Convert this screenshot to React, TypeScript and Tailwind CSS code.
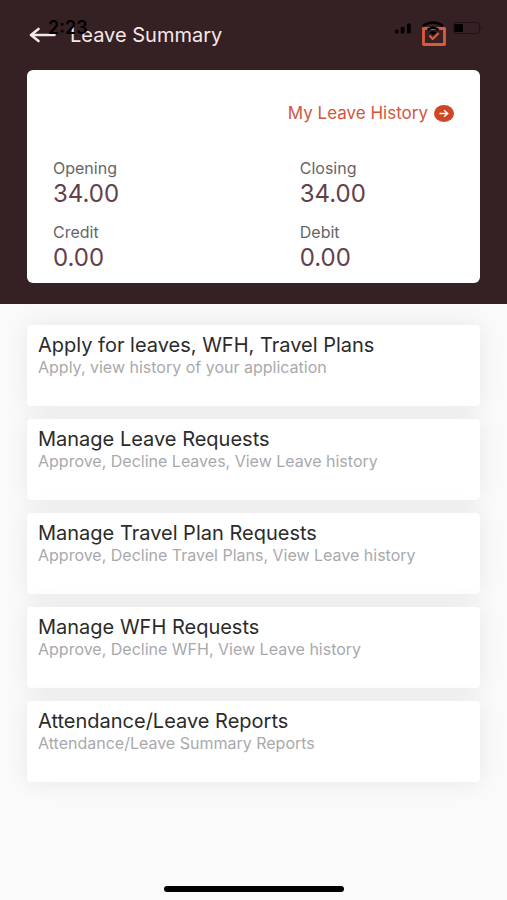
import React from 'react'

const menus = [
  { id: 'apply', title: 'Apply for leaves, WFH, Travel Plans', text: 'Apply, view history of your application' },
  { id: 'leave', title: 'Manage Leave Requests', text: 'Approve, Decline Leaves, View Leave history' },
  { id: 'travel', title: 'Manage Travel Plan Requests', text: 'Approve, Decline Travel Plans, View Leave history' },
  { id: 'wfh', title: 'Manage WFH Requests', text: 'Approve, Decline WFH, View Leave history' },
  { id: 'reports', title: 'Attendance/Leave Reports', text: 'Attendance/Leave Summary Reports' },
]

const balances = [
  { label: 'Opening', value: '34.00' },
  { label: 'Closing', value: '34.00' },
  { label: 'Credit', value: '0.00' },
  { label: 'Debit', value: '0.00' },
]

const StatusBar = () => {
  return (
    <div className="pointer-events-none absolute inset-x-0 top-4 z-10 flex items-center justify-between pl-12 pr-6 text-black">
      <span className="text-lg leading-6 font-semibold">2:23</span>
      <div className="flex items-center gap-2">
        <svg width="18" height="12" viewBox="0 0 18 12" fill="currentColor">
          <rect x="0" y="7.5" width="3.6" height="4" rx="1.5" />
          <rect x="5.7" y="5" width="3.8" height="6.5" rx="1" />
          <rect x="12" y="1.5" width="3.8" height="10" rx="1" />
        </svg>
        <svg width="24" height="14" viewBox="0 0 24 14" fill="none" stroke="currentColor" strokeWidth="2.6">
          <path d="M2 5Q12-2 22 5M6.5 9Q12 4.5 17.5 9" />
          <path d="M8.5 11.5Q12 9 15.5 11.5L12 14Z" fill="currentColor" stroke="none" />
        </svg>
        <svg width="30" height="12" viewBox="0 0 30 12">
          <rect x="0.5" y="0.5" width="26" height="11" rx="3" fill="none" stroke="currentColor" opacity="0.4" />
          <rect x="1.5" y="2" width="8.5" height="8" rx="1" fill="currentColor" />
          <path d="M28 4q2 2 0 4z" fill="currentColor" opacity="0.5" />
        </svg>
      </div>
    </div>
  )
}

const App = () => {
  return (
    <div className="flex min-h-screen flex-col bg-[#fafafa] font-['Inter','Liberation_Sans',sans-serif]">
      <header className="relative bg-[#352024] px-[27px] pt-5 pb-[21px]">
        <StatusBar />
        <div className="flex h-[30px] items-center pr-[33px] text-[#f5e8e9]">
          <button type="button" aria-label="Back" className="mr-3">
            <svg width="31" height="18" viewBox="0 0 31 18" fill="none" stroke="currentColor" strokeWidth="2.6" strokeLinecap="round" strokeLinejoin="round">
              <path d="M11.5 3L4 9l7.5 6M4 9h23.5" />
            </svg>
          </button>
          <h1 className="flex-1 text-xl leading-6">Leave Summary</h1>
          <button type="button" aria-label="Leave requests" className="text-[#dc5a3c]">
            <svg width="26" height="26" viewBox="0 0 26 26" fill="none" stroke="currentColor" strokeWidth="2.8" strokeLinejoin="round">
              <path d="M2.5 6.5h21v16h-21z" />
              <path d="M8.5 13.5l3.2 3.5 6-6" strokeWidth="2.2" />
            </svg>
          </button>
        </div>

        <section className="mt-5 rounded-md bg-white px-[26px] pt-[31px] pb-[11px]">
          <div className="flex justify-end">
            <a href="#history" className="flex items-center gap-1.5 text-[17px] leading-6 text-[#d0563f]">
              My Leave History
              <svg width="20" height="17" viewBox="0 0 20 17" fill="none">
                <ellipse cx="10" cy="8.5" rx="10" ry="8.5" fill="#cf4526" />
                <path d="M5.5 8.5h8M10 5.3l3.8 3.2L10 11.7" stroke="white" strokeWidth="1.3" />
              </svg>
            </a>
          </div>
          <dl className="mt-[31px] grid grid-cols-[8fr_5fr] gap-y-3">
            {balances.map((item) => (
              <div key={item.label}>
                <dt className="text-base leading-6 text-[#666666]">{item.label}</dt>
                <dd className="text-2xl leading-7 text-[#63404a]">{item.value}</dd>
              </div>
            ))}
          </dl>
        </section>
      </header>

      <main className="flex flex-col gap-[13px] px-[27px] pt-[21px]">
        {menus.map((menu) => (
          <a key={menu.id} href={`#${menu.id}`} className="block min-h-[81px] rounded bg-white px-[11px] pt-2 shadow-[0_0_24px_rgba(0,0,0,0.08)]">
            <h2 className="text-xl leading-6 text-[#2b2b2b]">{menu.title}</h2>
            <p className="text-base leading-5 text-[#a9a9ad]">{menu.text}</p>
          </a>
        ))}
      </main>

      <div className="mx-auto mt-auto mb-2 h-[6px] w-[180px] rounded-full bg-black" />
    </div>
  )
}

export default App
